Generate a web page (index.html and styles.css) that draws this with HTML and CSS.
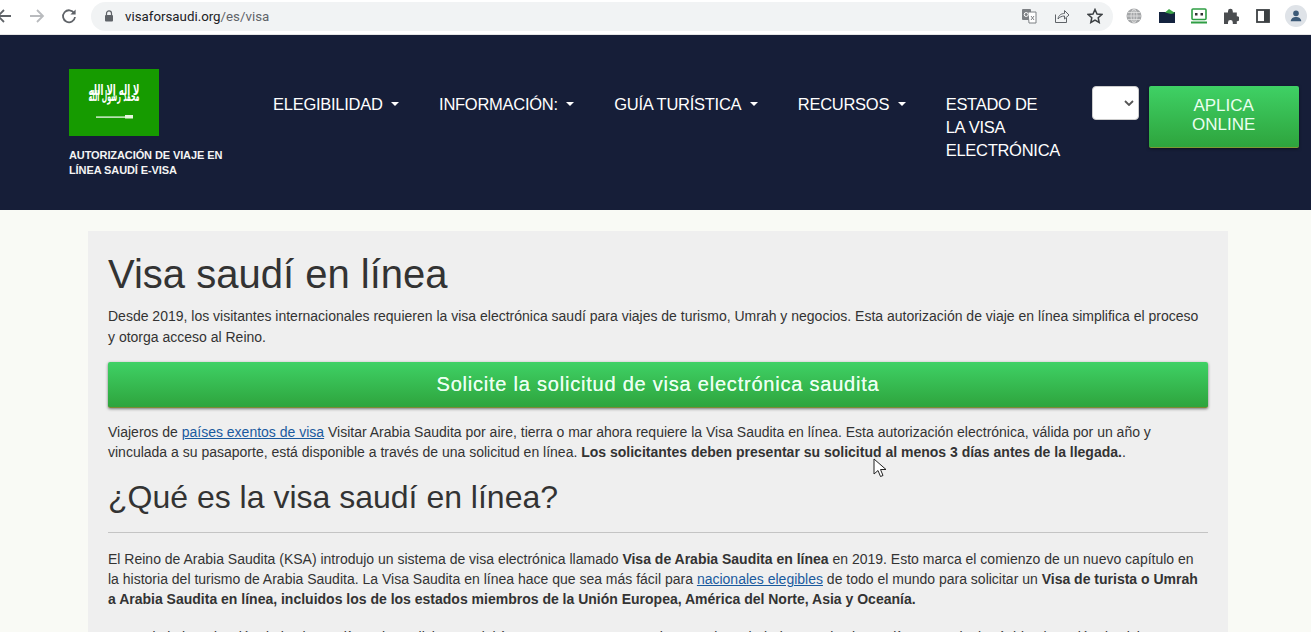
FILE: index.html
```html
<!DOCTYPE html>
<html lang="es">
<head>
<meta charset="utf-8">
<title>Visa saudí en línea</title>
<link rel="stylesheet" href="styles.css">
</head>
<body>
<div class="toolbar">
  <svg class="tb-nav tb-back" viewBox="0 0 16 16"><path d="M14 8H1M7 2L1 8l6 6" fill="none" stroke="#5f6368" stroke-width="1.8"/></svg>
  <svg class="tb-nav tb-fwd" viewBox="0 0 16 16"><path d="M1 8h13M8 2l6 6-6 6" fill="none" stroke="#b9bbbe" stroke-width="1.8"/></svg>
  <svg class="tb-nav tb-reload" viewBox="0 0 16 16"><path d="M13.2 5.2A6 6 0 1 0 14 9" fill="none" stroke="#5f6368" stroke-width="1.8"/><path d="M14.6 1.4v5.2H9.4z" fill="#5f6368"/></svg>
  <div class="omnibox">
    <svg class="lock" viewBox="0 0 10 12"><path d="M2.5 5V3.4a2.5 2.5 0 0 1 5 0V5" fill="none" stroke="#5f6368" stroke-width="1.2"/><rect x="1" y="5" width="8" height="6.5" rx="1" fill="#5f6368"/></svg>
    <span class="url"><span class="url-host">visaforsaudi.org</span>/es/visa</span>
    <div class="omni-icons">
      <svg class="ico" viewBox="0 0 16 16"><rect x="1" y="1" width="9" height="11" rx="1" fill="#7d8084"/><path d="M7 4h8v11H8z" fill="#fff" stroke="#7d8084"/><circle cx="5.2" cy="6.5" r="2" fill="none" stroke="#fff"/><path d="M10 8l3 4M13 8l-3 4" stroke="#7d8084"/></svg>
      <svg class="ico" viewBox="0 0 16 16"><path d="M1.5 6.5v8h11V10" fill="none" stroke="#5f6368"/><path d="M4 11c.5-4 3.500-5.500 6.500-5.500V2.500l4.500 4.500-4.500 4V8C8 8 5.500 9 4 11z" fill="none" stroke="#5f6368"/></svg>
      <svg class="ico" viewBox="0 0 16 16"><path d="M8 1.500l2 4.500 4.800.500-3.600 3.200 1 4.800L8 12.100 3.800 14.500l1-4.800L1.200 6.500 6 6z" fill="none" stroke="#3c4043" stroke-width="1.500"/></svg>
    </div>
  </div>
  <div class="ext-icons">
    <svg class="ext" viewBox="0 0 16 16"><circle cx="8" cy="8" r="7.500" fill="#a4a6a8"/><path d="M.5 8h15M2 4.500h12M2 11.500h12M8 .5v15M8 .5C4 4 4 12 8 15.500M8 .5c4 3.500 4 11.500 0 15" fill="none" stroke="#e6e6e6" stroke-width=".8"/></svg>
    <svg class="ext" viewBox="0 0 16 16"><path d="M0 4h16v11H0z" fill="#14233f"/><path d="M6 4.500L10 1l6 4-4 1z" fill="#3ea648"/></svg>
    <svg class="ext" viewBox="0 0 16 16"><rect x="1" y="1" width="14" height="10.500" rx="1" fill="#fff" stroke="#2f9e44" stroke-width="1.600"/><rect x="4" y="5" width="2.500" height="2.500" fill="#333"/><rect x="9.500" y="5" width="2.500" height="2.500" fill="#333"/><rect x="0" y="13.500" width="16" height="2" fill="#2f9e44"/></svg>
    <svg class="ext" viewBox="0 0 16 16"><path d="M1 4.500h4V3.200a2.400 2.400 0 0 1 4.800 0v1.300h4v3.700h.2a2.500 2.500 0 0 1 0 5h-.2V16H9.800v-1.500a2.400 2.400 0 0 0-4.800 0V16H1z" fill="#4a4d50"/></svg>
    <svg class="ext" viewBox="0 0 16 16"><rect x="2" y="2" width="12" height="12" fill="none" stroke="#3c4043" stroke-width="1.800"/><rect x="9" y="2" width="5" height="12" fill="#3c4043"/></svg>
    <div class="avatar"><svg viewBox="0 0 16 16"><circle cx="8" cy="5" r="3.200" fill="#3c5a78"/><path d="M2 14c0-3.500 3-5 6-5s6 1.500 6 5z" fill="#3c5a78"/></svg></div>
  </div>
</div>

<header class="site-header">
  <div class="brand">
    <svg class="flag" viewBox="0 0 90 67">
      <rect width="90" height="67" fill="#169b00"/>
      <text class="shahada" x="45" y="26" text-anchor="middle" textLength="51" lengthAdjust="spacingAndGlyphs">لا إله إلا الله</text>
      <text class="shahada" x="45" y="32" text-anchor="middle" textLength="51" lengthAdjust="spacingAndGlyphs">محمد رسول الله</text>
      <path d="M27 47.500h31v1.200H27z" fill="#fff"/>
      <path d="M56 46h8v3.500h-8z" fill="#e8f5e0"/>
    </svg>
    <p class="brand-name">AUTORIZACIÓN DE VIAJE EN LÍNEA SAUDÍ E-VISA</p>
  </div>
  <nav class="main-nav">
    <a class="nav-item">ELEGIBILIDAD<i class="caret"></i></a>
    <a class="nav-item">INFORMACIÓN:<i class="caret"></i></a>
    <a class="nav-item">GUÍA TURÍSTICA<i class="caret"></i></a>
    <a class="nav-item">RECURSOS<i class="caret"></i></a>
    <a class="nav-item nav-wrap">ESTADO DE<br>LA VISA<br>ELECTRÓNICA</a>
  </nav>
  <div class="lang-select"><svg viewBox="0 0 10 6"><path d="M1 1l4 4 4-4" fill="none" stroke="#555" stroke-width="1.800"/></svg></div>
  <a class="apply-btn">APLICA ONLINE</a>
</header>

<main class="page">
  <article class="card">
    <h1>Visa saudí en línea</h1>
    <p class="intro">Desde 2019, los visitantes internacionales requieren la visa electrónica saudí para viajes de turismo, Umrah y negocios. Esta autorización de viaje en línea simplifica el proceso y otorga acceso al Reino.</p>
    <a class="cta">Solicite la solicitud de visa electrónica saudita</a>
    <p class="after-cta">Viajeros de <a class="link">países exentos de visa</a> Visitar Arabia Saudita por aire, tierra o mar ahora requiere la Visa Saudita en línea. Esta autorización electrónica, válida por un año y vinculada a su pasaporte, está disponible a través de una solicitud en línea. <strong>Los solicitantes deben presentar su solicitud al menos 3 días antes de la llegada.</strong>.</p>
    <h2>¿Qué es la visa saudí en línea?</h2>
    <hr class="rule">
    <p class="body-text">El Reino de Arabia Saudita (KSA) introdujo un sistema de visa electrónica llamado <strong>Visa de Arabia Saudita en línea</strong> en 2019. Esto marca el comienzo de un nuevo capítulo en la historia del turismo de Arabia Saudita. La Visa Saudita en línea hace que sea más fácil para <a class="link">nacionales elegibles</a> de todo el mundo para solicitar un <strong>Visa de turista o Umrah a Arabia Saudita en línea, incluidos los de los estados miembros de la Unión Europea, América del Norte, Asia y Oceanía.</strong></p>
    <p class="body-text">Antes de la introducción de la visa en línea, los solicitantes debían pasar por un proceso largo en la embajada, pero la visa en línea permite la rápida obtención de visita</p>
  </article>
</main>

<svg class="cursor" viewBox="0 0 14 20"><path d="M1 1v15l4-3.500 2.500 6 2.500-1-2.500-6H13z" fill="#fff" stroke="#222" stroke-width="1"/></svg>
</body>
</html>
```
FILE: styles.css
```css
* { box-sizing: border-box; }
html, body { margin: 0; height: 632px; overflow: hidden; }
body { background: #f9faf5; font-family: "Liberation Sans", Arial, sans-serif; color: #333; position: relative; }

.toolbar { height: 35px; background: #fff; display: flex; align-items: center; padding: 0 0 2px 0; border-bottom: 1px solid #e6e6e6; }
.tb-nav { width: 16px; height: 16px; flex: none; }
.tb-back { margin-left: -3px; }
.tb-fwd { margin-left: 16px; }
.tb-reload { margin-left: 16px; }
.omnibox { margin-left: 14px; width: 1022px; height: 29px; border-radius: 15px; background: #f1f3f4; display: flex; align-items: center; padding-left: 13px; flex: none; }
.lock { width: 10px; height: 12px; flex: none; }
.url { margin-left: 11px; font: 13.3px "Roboto", "Liberation Sans", sans-serif; color: #5f6368; white-space: nowrap; }
.url-host { color: #202124; }
.omni-icons { margin-left: auto; display: flex; gap: 17px; padding-right: 10px; }
.ico { width: 16px; height: 16px; }
.ext-icons { display: flex; align-items: center; margin-left: 13px; gap: 16px; }
.ext { width: 16px; height: 16px; flex: none; }
.ext:nth-child(n+2) { position: relative; left: 1px; }
.avatar { width: 22px; height: 22px; border-radius: 50%; background: #dfe3e8; display: flex; align-items: center; justify-content: center; margin-left: -1px; }
.avatar svg { width: 14px; height: 14px; }

.site-header { height: 175px; background: #161e38; display: flex; align-items: flex-start; padding-left: 69px; color: #fff; }
.brand { width: 204px; flex: none; padding-top: 34px; }
.flag { display: block; width: 90px; height: 67px; }
.shahada { font-family: "DejaVu Sans", sans-serif; font-size: 14px; font-weight: 700; fill: #fff; }
.brand-name { margin: 12px 0 0; width: 170px; font-size: 11px; font-weight: 700; letter-spacing: -.1px; line-height: 15px; color: #f4f4f4; }
.main-nav { display: flex; gap: 40px; padding-top: 58px; flex: none; }
.nav-item { font-size: 16.5px; line-height: 23px; letter-spacing: -.27px; color: #fff; white-space: nowrap; display: flex; align-items: flex-start; }
.nav-wrap { width: 115px; display: block; }
.caret { width: 0; height: 0; margin: 9px 0 0 8.5px; border-left: 4px solid transparent; border-right: 4px solid transparent; border-top: 4px solid #fff; }
.lang-select { position: relative; top: 51px; margin-left: 31px; width: 47px; height: 34px; background: #fff; border: 1px solid #ccc; border-radius: 4px; flex: none; display: flex; align-items: center; justify-content: flex-end; padding-right: 4px; }
.lang-select svg { width: 10px; height: 6px; }
.apply-btn { position: relative; top: 51px; margin-left: 10px; width: 150px; height: 62px; flex: none; padding: 10px 30px 0; border-radius: 2px; background: linear-gradient(#3fd165, #2ea43d); border-bottom: 1px solid #7d9a33; box-shadow: 0 1px 3px rgba(0,0,0,.5); text-align: center; color: #eafff0; font-size: 17px; line-height: 19px; }

.page { padding: 21px 83px 0 88px; }
.card { background: #efefef; padding: 20px 20px 0; height: 420px; overflow: hidden; }
h1 { margin: 0; font-size: 40px; font-weight: 400; line-height: 47px; color: #333; }
.intro { margin: 8px 0 0; font-size: 14px; line-height: 20.5px; }
.cta { display: block; margin-top: 15px; height: 46px; border-radius: 2px; background: linear-gradient(#3fd165, #2ea43d); border-bottom: 1px solid #7d8a33; box-shadow: 0 1px 3px rgba(0,0,0,.5); color: #eafff0; text-align: center; font-size: 20px; letter-spacing: .78px; line-height: 44px; text-shadow: 0 0 .6px #eafff0; }
.after-cta { margin: 14px 0 0; font-size: 14px; line-height: 20px; }
.link { color: #1a5a9e; text-decoration: underline; }
h2 { margin: 17px 0 0; font-size: 32px; font-weight: 400; line-height: 37px; color: #333; }
.rule { margin: 16px 0 0; border: 0; border-top: 1px solid #c4c4c4; height: 0; }
.body-text { margin: 16px 0 0; font-size: 14px; line-height: 20px; }
.body-text + .body-text { margin-top: 18px; white-space: nowrap; }
.cursor { position: absolute; left: 873px; top: 458px; width: 14px; height: 20px; }
```
